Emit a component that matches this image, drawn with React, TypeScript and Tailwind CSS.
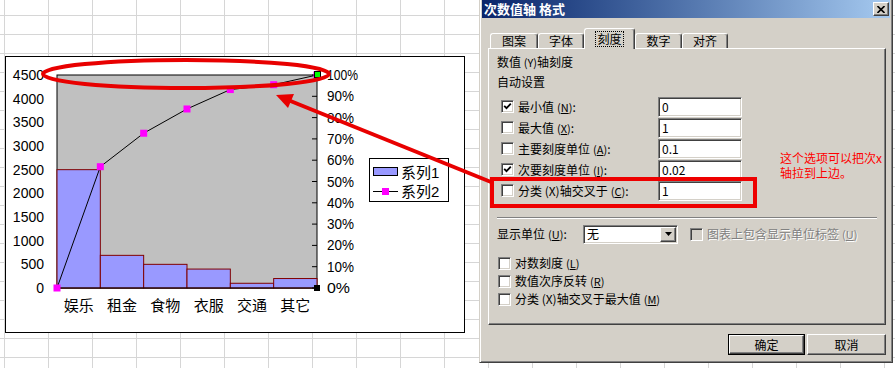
const CATS = ["娱乐", "租金", "食物", "衣服", "交通", "其它"];
const VALUES = [2500, 690, 500, 400, 100, 200];

// plot area in page coordinates
const X0 = 57;
const Y0 = 288;
const PW = 260;
const PH = 213;
const CW = PW / 6;
const yv = (v: number) => Y0 - (v / 4500) * PH;

const total = VALUES.reduce((a, b) => a + b, 0);
let acc = 0;
const CUM = [0, ...VALUES.map((v) => (acc += v) / total)];

const FONT = { fontFamily: '"Liberation Sans", "Noto Sans CJK SC", sans-serif' };

function Chart() {
  const pts = CUM.map((p, i) => [X0 + i * CW, Y0 - p * PH]);
  return (
    <div className="h-[277px] w-[460px] border border-black bg-white">
      <svg width="458" height="275" viewBox="6 57 458 275" style={FONT} className="block">
        <rect x={X0} y={75} width={PW} height={PH} fill="#c0c0c0" stroke="#000" />
        {VALUES.map((v, i) => (
          <rect key={i} x={X0 + i * CW} y={yv(v)} width={CW} height={Y0 - yv(v)} fill="#9999ff" stroke="#800000" />
        ))}
        <line x1={X0} y1={Y0} x2={X0 + PW} y2={Y0} stroke="#000" />
        {Array.from({ length: 11 }, (_, k) => (
          <line key={k} x1={312} y1={Y0 - (k * PH) / 10} x2={317} y2={Y0 - (k * PH) / 10} stroke="#000" />
        ))}
        {Array.from({ length: 10 }, (_, k) => (
          <text key={k} x={44} y={yv(k * 500) + 5} fontSize="14" textAnchor="end">
            {k * 500}
          </text>
        ))}
        {Array.from({ length: 11 }, (_, k) => (
          <text key={k} x={327} y={Y0 - (k * PH) / 10 + 5} fontSize="14" textLength={k === 10 ? 31 : k === 0 ? 23 : 27} lengthAdjust="spacingAndGlyphs">
            {k * 10}%
          </text>
        ))}
        {CATS.map((c, i) => (
          <text key={c} x={X0 + i * CW + CW / 2} y={311} fontSize="15" textAnchor="middle">
            {c}
          </text>
        ))}
        <polyline points={pts.map((p) => p.join(",")).join(" ")} fill="none" stroke="#000" />
        {pts.map(([x, y], i) => (
          <rect key={i} x={x - 3.5} y={y - 3.5} width={7} height={7} fill="#ff00ff" />
        ))}
        <rect x={314.5} y={71.5} width={6} height={6} fill="#00ff00" stroke="#000" />
        <rect x={314} y={285} width={6} height={6} fill="#000" />

        <rect x={369.5} y={158.5} width={79} height={43} fill="#fff" stroke="#000" />
        <rect x={373.5} y={167.5} width={24} height={8} fill="#9999ff" stroke="#000" />
        <text x={401} y={178} fontSize="15">系列1</text>
        <line x1={373} y1={191.5} x2={398} y2={191.5} stroke="#000" />
        <rect x={382} y={188} width={7} height={7} fill="#ff00ff" />
        <text x={401} y={197} fontSize="15">系列2</text>
      </svg>
    </div>
  );
}

function CheckBox({ checked, disabled }: { checked?: boolean; disabled?: boolean }) {
  return (
    <span
      className={`flex h-[13px] w-[13px] shrink-0 items-center justify-center border border-t-[#808080] border-l-[#808080] border-r-white border-b-white shadow-[inset_1px_1px_0_#404040,inset_-1px_-1px_0_#d4d0c8] ${
        disabled ? "bg-[#d4d0c8]" : "bg-white"
      }`}
    >
      {checked && (
        <svg width="9" height="9" viewBox="0 0 9 9">
          <path d="M1.2 3.8 L3.5 6.2 L7.8 1.6" stroke="#000" strokeWidth="1.8" fill="none" />
        </svg>
      )}
    </span>
  );
}

function Field({ value }: { value: string }) {
  return (
    <div className="flex h-[20px] w-[84px] items-center border border-t-[#808080] border-l-[#808080] border-r-white border-b-white bg-white pl-[3px] shadow-[inset_1px_1px_0_#404040,inset_-1px_-1px_0_#d4d0c8]">
      {value}
    </div>
  );
}

function Key({ k }: { k: string }) {
  return (
    <span className="ml-[3px] text-[11px]">
      (<u>{k}</u>)
    </span>
  );
}

function AutoRow({ label, k, value, checked }: { label: string; k: string; value: string; checked?: boolean }) {
  return (
    <div className="flex h-[21px] items-center pl-[12px]">
      <CheckBox checked={checked} />
      <span className="ml-[4px] w-[140px]">
        {label}
        <Key k={k} />:
      </span>
      <Field value={value} />
    </div>
  );
}

function PlainRow({ label, k, tail = "" }: { label: string; k: string; tail?: string }) {
  return (
    <div className="flex h-[18px] items-center pl-[9px]">
      <CheckBox />
      <span className="ml-[4px]">
        {label}
        <Key k={k} />
        {tail}
      </span>
    </div>
  );
}

function Tab({ label, w, active }: { label: string; w: string; active?: boolean }) {
  if (active)
    return (
      <div className={`relative z-10 -mb-[1px] flex h-[21px] ${w} items-start justify-center rounded-t-[3px] border-t border-l border-t-white border-l-white border-r border-r-[#404040] bg-[#d4d0c8] pt-[2px] shadow-[inset_-1px_0_0_#808080]`}>
        <span className="border border-dotted border-black px-[1px] leading-[14px]">{label}</span>
      </div>
    );
  return (
    <div className={`flex h-[15px] ${w} items-center justify-center rounded-t-[3px] border-t border-l border-t-white border-l-white border-r border-r-[#404040] shadow-[inset_-1px_0_0_#808080]`}>
      {label}
    </div>
  );
}

function RaisedBtn({ label, w, def }: { label: string; w: string; def?: boolean }) {
  return (
    <div className={`flex h-[21px] ${w} items-center justify-center ${def ? "border border-black" : ""}`}>
      <div className="flex h-full w-full items-center justify-center border border-t-white border-l-white border-r-[#404040] border-b-[#404040] shadow-[inset_-1px_-1px_0_#808080]">
        {label}
      </div>
    </div>
  );
}

function Dialog() {
  return (
    <div
      className="flex h-[363px] w-[414px] shrink-0 flex-col border-l border-r border-b border-l-[#d4d0c8] border-r-[#404040] border-b-[#404040] bg-[#d4d0c8] px-[2px] text-[12px] text-black shadow-[inset_1px_0_0_#fff,inset_-1px_-1px_0_#808080]"
      style={{ fontFamily: '"Noto Sans CJK SC", sans-serif' }}
    >
      <div className="flex h-[18px] items-center justify-between bg-linear-to-r from-[#0a246a] to-[#a6caf0] pl-[2px] pr-[1px]">
        <span className="text-[13px] font-bold text-white">次数值轴 格式</span>
        <div className="flex h-[14px] w-[16px] items-center justify-center border border-t-white border-l-white border-r-[#404040] border-b-[#404040] bg-[#d4d0c8] shadow-[inset_-1px_-1px_0_#808080]">
          <svg width="8" height="7" viewBox="0 0 8 7">
            <path d="M0.5 0 L7.5 7 M7.5 0 L0.5 7" stroke="#000" strokeWidth="1.6" />
          </svg>
        </div>
      </div>

      <div className="ml-[6px] mt-[11px] w-[398px]">
        <div className="flex h-[19px] items-end pl-[2px]">
          <Tab label="图案" w="w-[48px]" />
          <Tab label="字体" w="w-[46px]" />
          <Tab label="刻度" w="w-[51px]" active />
          <Tab label="数字" w="w-[47px]" />
          <Tab label="对齐" w="w-[46px]" />
        </div>
        <div className="h-[277px] border-t border-l border-t-white border-l-white border-r border-b border-r-[#404040] border-b-[#404040] shadow-[inset_-1px_-1px_0_#808080]">
          <div className="pl-[8px] pt-[5px] leading-[16px]">
            数值 <span className="text-[11px]">(Y)</span>轴刻度
          </div>
          <div className="mt-[4px] pl-[8px] leading-[16px]">自动设置</div>
          <div className="mt-[6px] flex flex-col">
            <AutoRow label="最小值" k="N" value="0" checked />
            <AutoRow label="最大值" k="X" value="1" />
            <AutoRow label="主要刻度单位" k="A" value="0.1" />
            <AutoRow label="次要刻度单位" k="I" value="0.02" checked />
            <AutoRow label="分类 (X)轴交叉于" k="C" value="1" />
          </div>
          <div className="ml-[8px] mt-[16px] h-[2px] w-[380px] border-t border-b border-t-[#808080] border-b-white" />
          <div className="mt-[6px] flex h-[18px] items-center pl-[8px]">
            <span className="w-[86px]">
              显示单位<Key k="U" />:
            </span>
            <div className="flex h-[19px] w-[95px] items-center justify-between border border-t-[#808080] border-l-[#808080] border-r-white border-b-white bg-white pl-[3px] shadow-[inset_1px_1px_0_#404040,inset_-1px_-1px_0_#d4d0c8]">
              <span>无</span>
              <div className="mr-[1px] flex h-[15px] w-[16px] items-center justify-center border border-t-white border-l-white border-r-[#404040] border-b-[#404040] bg-[#d4d0c8] shadow-[inset_-1px_-1px_0_#808080]">
                <svg width="7" height="4" viewBox="0 0 7 4">
                  <path d="M0 0 H7 L3.5 4 Z" fill="#000" />
                </svg>
              </div>
            </div>
            <span className="ml-[12px]">
              <CheckBox disabled />
            </span>
            <span className="ml-[4px] text-[#808080] [text-shadow:1px_1px_0_#fff]">
              图表上包含显示单位标签<Key k="U" />
            </span>
          </div>
          <div className="mt-[11px] flex flex-col">
            <PlainRow label="对数刻度" k="L" />
            <PlainRow label="数值次序反转" k="R" />
            <PlainRow label="分类 (X)轴交叉于最大值" k="M" />
          </div>
        </div>
        <div className="mt-[9px] flex justify-end gap-[2px]">
          <RaisedBtn label="确定" w="w-[77px]" def />
          <RaisedBtn label="取消" w="w-[79px]" />
        </div>
      </div>
    </div>
  );
}

function Annotations() {
  return (
    <>
      <svg className="pointer-events-none absolute left-0 top-0" width="895" height="368">
        <ellipse cx="186" cy="74" rx="143" ry="14" fill="none" stroke="#e80000" strokeWidth="4" />
        <rect x="492" y="179" width="263" height="27" fill="none" stroke="#ee0000" strokeWidth="4" />
        <line x1="491" y1="182" x2="288" y2="100" stroke="#e80000" strokeWidth="4" />
        <polygon points="276,95 294,94 288,108" fill="#e80000" />
      </svg>
      <div
        className="pointer-events-none absolute left-[780px] top-[150px] text-[12px] leading-[15px] text-[#ff0000]"
        style={{ fontFamily: '"Noto Sans CJK SC", sans-serif' }}
      >
        这个选项可以把次x
        <br />
        轴拉到上边。
      </div>
    </>
  );
}

export default function App() {
  return (
    <div className="relative flex h-[368px] w-[895px] items-start overflow-hidden bg-white bg-[linear-gradient(to_right,#d6d6d6_1px,transparent_1px),linear-gradient(to_bottom,#d6d6d6_1px,transparent_1px)] bg-size-[44px_19px] bg-position-[4px_15px]">
      <div className="w-[479px] shrink-0 pl-[5px] pt-[56px]">
        <Chart />
      </div>
      <Dialog />
      <Annotations />
    </div>
  );
}
